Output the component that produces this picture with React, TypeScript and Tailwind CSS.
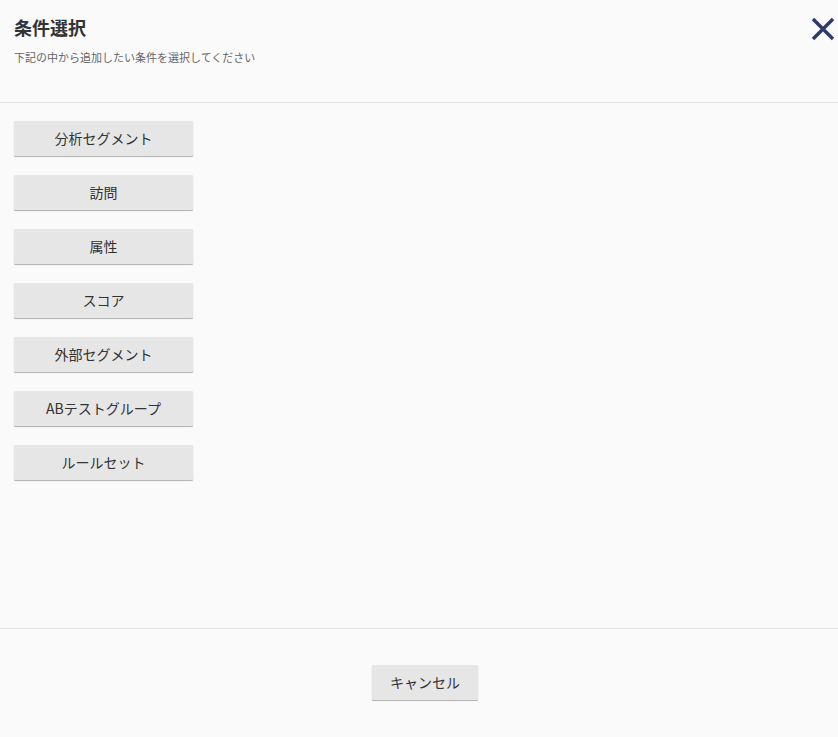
export default function App() {
  const items = ["分析セグメント", "訪問", "属性", "スコア", "外部セグメント", "ABテストグループ", "ルールセット"];

  return (
    <div
      className="flex flex-col h-[737px] w-[838px] bg-[#fafafa] text-[#333]"
      style={{ fontFamily: '"Noto Sans CJK JP", "Noto Sans", sans-serif' }}
    >
      <div className="relative h-[103px] border-b border-[#e3e3e3] px-[14px] pt-[15px]">
        <h1 className="text-[18px] font-bold leading-[24px] text-[#333]">条件選択</h1>
        <p className="mt-[10px] text-[11px] leading-[16px] text-[#666]">下記の中から追加したい条件を選択してください</p>
        <button className="absolute right-[3px] top-[17px] w-[24px] h-[24px]">
          <svg viewBox="0 0 24 24" width="24" height="24">
            <path d="M2 2 L22 22 M22 2 L2 22" stroke="#2d3b6b" strokeWidth="3.4" />
          </svg>
        </button>
      </div>

      <div className="flex-1 flex flex-col gap-[19px] px-[14px] pt-[18px]">
        {items.map((t) => (
          <button
            key={t}
            className="w-[179px] h-[35px] bg-[#e6e6e6] text-[14px] text-[#333] rounded-[1px] shadow-[0_1px_1px_rgba(0,0,0,0.3)]"
          >
            {t}
          </button>
        ))}
      </div>

      <div className="h-[109px] border-t border-[#e3e3e3] flex justify-center pl-[12px] pt-[36px]">
        <button className="w-[106px] h-[35px] bg-[#e6e6e6] text-[14px] text-[#333] rounded-[1px] shadow-[0_1px_1px_rgba(0,0,0,0.3)]">
          キャンセル
        </button>
      </div>
    </div>
  );
}
